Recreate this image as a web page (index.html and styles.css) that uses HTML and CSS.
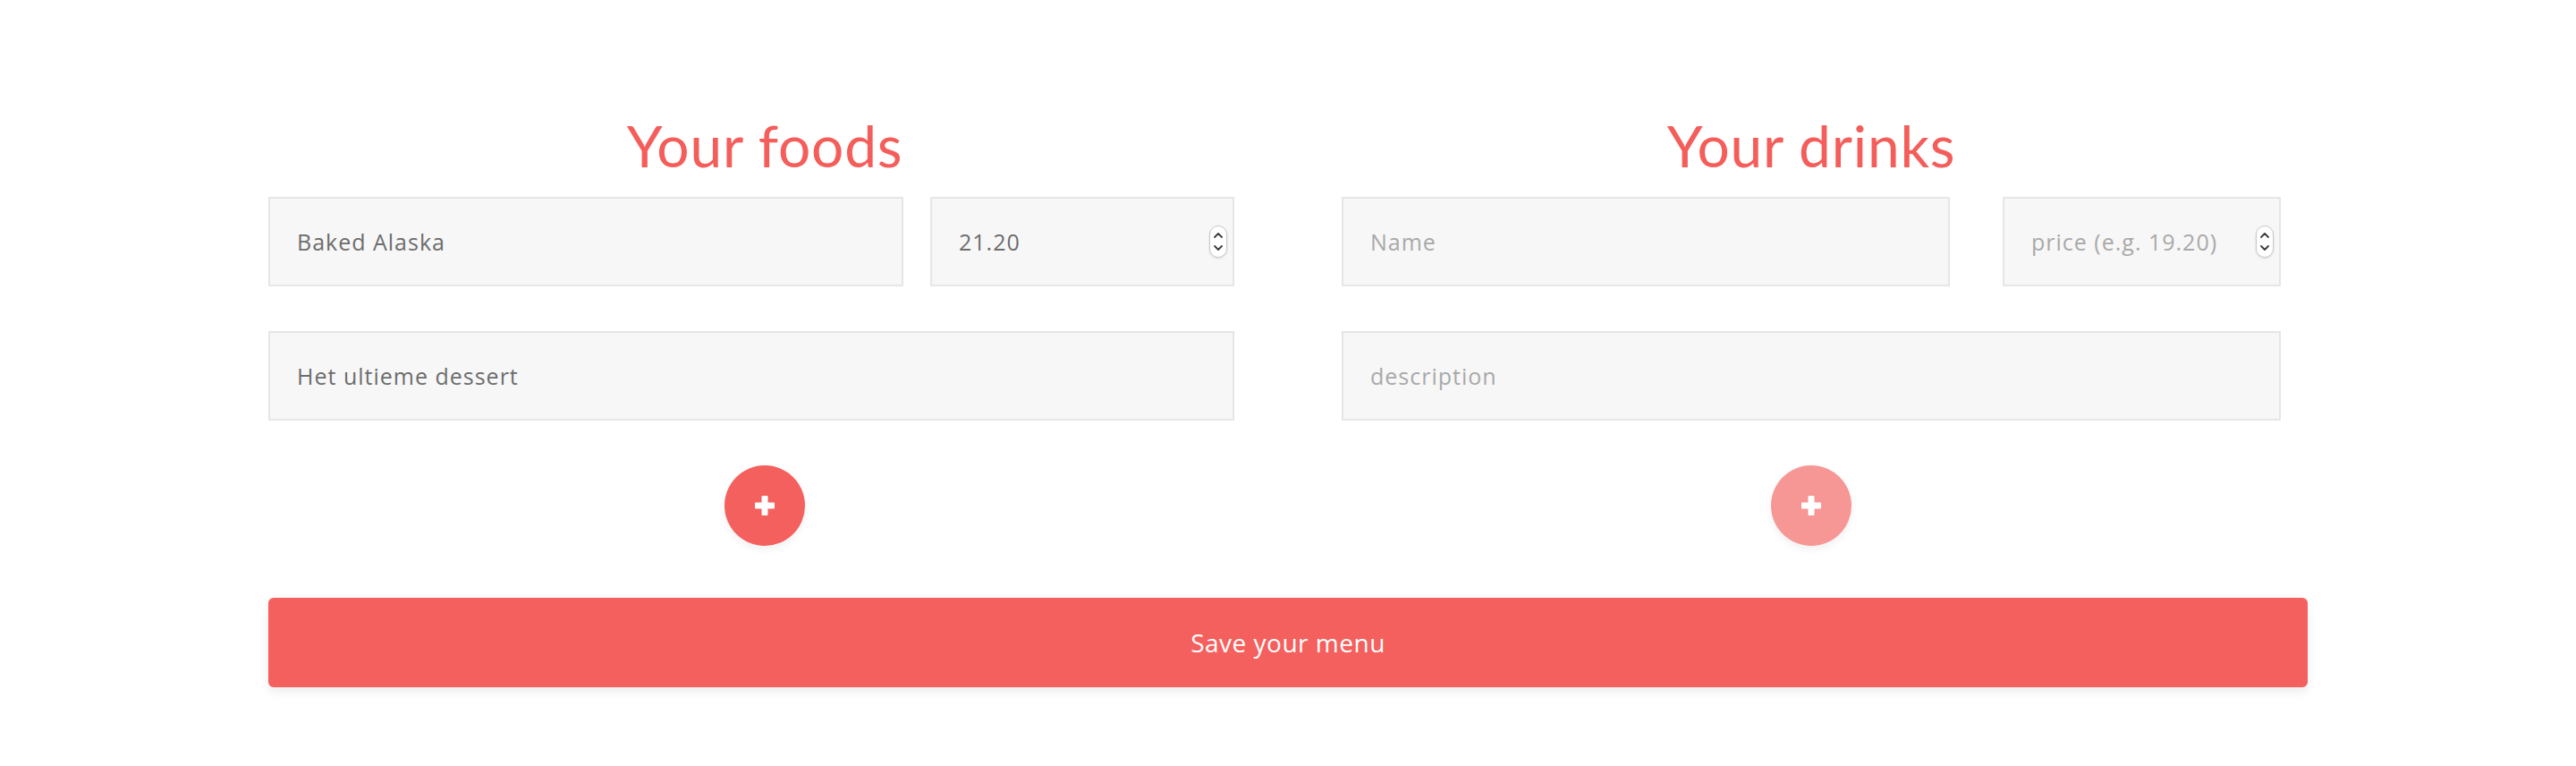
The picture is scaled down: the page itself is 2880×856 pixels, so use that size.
FILE: index.html
```html
<!DOCTYPE html>
<html lang="nl">
<head>
<meta charset="utf-8">
<title>Menu</title>
<link rel="stylesheet" href="styles.css">
</head>
<body>
<main class="page">
  <form class="menu-form">
    <div class="columns">
      <section class="col col-foods">
        <h2 class="col-title">Your foods</h2>
        <div class="row-top row-foods">
          <input class="field field-name" type="text" placeholder="Name" value="Baked Alaska">
          <span class="price-wrap">
            <input class="field field-price" type="number" step="0.01" placeholder="price (e.g. 19.20)" value="21.20">
            <svg class="spinner" viewBox="0 0 20 36" width="20" height="36"><rect x="0.5" y="0.5" width="19" height="35" rx="9.5" fill="#fff" stroke="#c9c9c9"/><path d="M6 13 L10 9 L14 13" fill="none" stroke="#3a3a3a" stroke-width="1.8" stroke-linecap="round" stroke-linejoin="round"/><path d="M6 23 L10 27 L14 23" fill="none" stroke="#3a3a3a" stroke-width="1.8" stroke-linecap="round" stroke-linejoin="round"/></svg>
          </span>
        </div>
        <input class="field field-desc" type="text" placeholder="description" value="Het ultieme dessert">
        <div class="add-wrap">
          <button type="button" class="add-btn">
            <svg class="plus" viewBox="0 0 22 22" width="22" height="22"><rect x="7.5" y="0" width="7" height="22" rx="1" fill="#fff"/><rect x="0" y="7.5" width="22" height="7" rx="1" fill="#fff"/></svg>
          </button>
        </div>
      </section>
      <section class="col col-drinks">
        <h2 class="col-title">Your drinks</h2>
        <div class="row-top row-drinks">
          <input class="field field-name" type="text" placeholder="Name">
          <span class="price-wrap">
            <input class="field field-price" type="number" step="0.01" placeholder="price (e.g. 19.20)">
            <svg class="spinner" viewBox="0 0 20 36" width="20" height="36"><rect x="0.5" y="0.5" width="19" height="35" rx="9.5" fill="#fff" stroke="#c9c9c9"/><path d="M6 13 L10 9 L14 13" fill="none" stroke="#3a3a3a" stroke-width="1.8" stroke-linecap="round" stroke-linejoin="round"/><path d="M6 23 L10 27 L14 23" fill="none" stroke="#3a3a3a" stroke-width="1.8" stroke-linecap="round" stroke-linejoin="round"/></svg>
          </span>
        </div>
        <input class="field field-desc" type="text" placeholder="description">
        <div class="add-wrap">
          <button type="button" class="add-btn add-btn-light">
            <svg class="plus" viewBox="0 0 22 22" width="22" height="22"><rect x="7.5" y="0" width="7" height="22" rx="1" fill="#fff"/><rect x="0" y="7.5" width="22" height="7" rx="1" fill="#fff"/></svg>
          </button>
        </div>
      </section>
    </div>
    <button type="button" class="save-btn">Save your menu</button>
  </form>
</main>
</body>
</html>
```

FILE: styles.css
```css
* { box-sizing: border-box; }

html, body {
  margin: 0;
  padding: 0;
  background: #ffffff;
}

body {
  font-family: "Open Sans", "Liberation Sans", sans-serif;
  color: #6b6b6b;
}

.page {
  padding: 122px 300px 88px 300px;
}

.menu-form {
  display: flex;
  flex-direction: column;
}

.columns {
  display: grid;
  grid-template-columns: 1110px 1050px;
  column-gap: 90px;
}

.col {
  display: flex;
  flex-direction: column;
}

.col-foods {
  padding-right: 30px;
}

.col-title {
  margin: 0 0 28px 0;
  height: 70px;
  line-height: 82px;
  text-align: center;
  font-family: "Lato", "Open Sans", sans-serif;
  font-weight: 400;
  font-size: 64px;
  color: #f45d5a;
  letter-spacing: 0.8px;
}

.col-foods .col-title { margin-right: -30px; }

.row-top {
  display: flex;
  margin-bottom: 50px;
}

.row-foods { gap: 30px; }
.row-foods .field-name { width: 710px; }
.row-foods .price-wrap { width: 340px; }

.row-drinks { gap: 59px; }
.row-drinks .field-name { width: 680px; }
.row-drinks .price-wrap { width: 311px; }

.field {
  height: 100px;
  margin: 0;
  border: 2px solid #e6e6e6;
  background: #f7f7f7;
  padding: 0 30px;
  font-family: "Open Sans", "Liberation Sans", sans-serif;
  font-size: 25px;
  letter-spacing: 1px;
  color: #6d6d6d;
  outline: none;
  border-radius: 0;
}

.field::placeholder {
  color: #a9a9a9;
  opacity: 1;
}

.price-wrap {
  position: relative;
  display: block;
}

.field-price {
  width: 100%;
  padding-right: 40px;
  -moz-appearance: textfield;
}

.field-price::-webkit-inner-spin-button,
.field-price::-webkit-outer-spin-button {
  -webkit-appearance: none;
  margin: 0;
}

.spinner {
  position: absolute;
  right: 8px;
  top: 32px;
  filter: drop-shadow(0 1px 1px rgba(0, 0, 0, 0.12));
  pointer-events: none;
}

.field-desc {
  width: 100%;
}

.add-wrap {
  display: flex;
  justify-content: center;
  padding-top: 50px;
  padding-bottom: 58px;
}

.col-foods .add-wrap { margin-right: -30px; }

.add-btn {
  width: 90px;
  height: 90px;
  border-radius: 50%;
  border: none;
  background: #f4605d;
  display: flex;
  align-items: center;
  justify-content: center;
  padding: 0;
  box-shadow: 0 4px 10px rgba(0, 0, 0, 0.06);
  cursor: pointer;
}

.add-btn-light {
  background: #f79795;
}

.save-btn {
  width: 100%;
  height: 100px;
  border: none;
  border-radius: 6px;
  background: #f4605d;
  color: #ffffff;
  font-family: "Open Sans", "Liberation Sans", sans-serif;
  font-size: 28px;
  font-weight: 500;
  letter-spacing: 0.5px;
  box-shadow: 0 5px 12px rgba(0, 0, 0, 0.08);
  cursor: pointer;
}
```
